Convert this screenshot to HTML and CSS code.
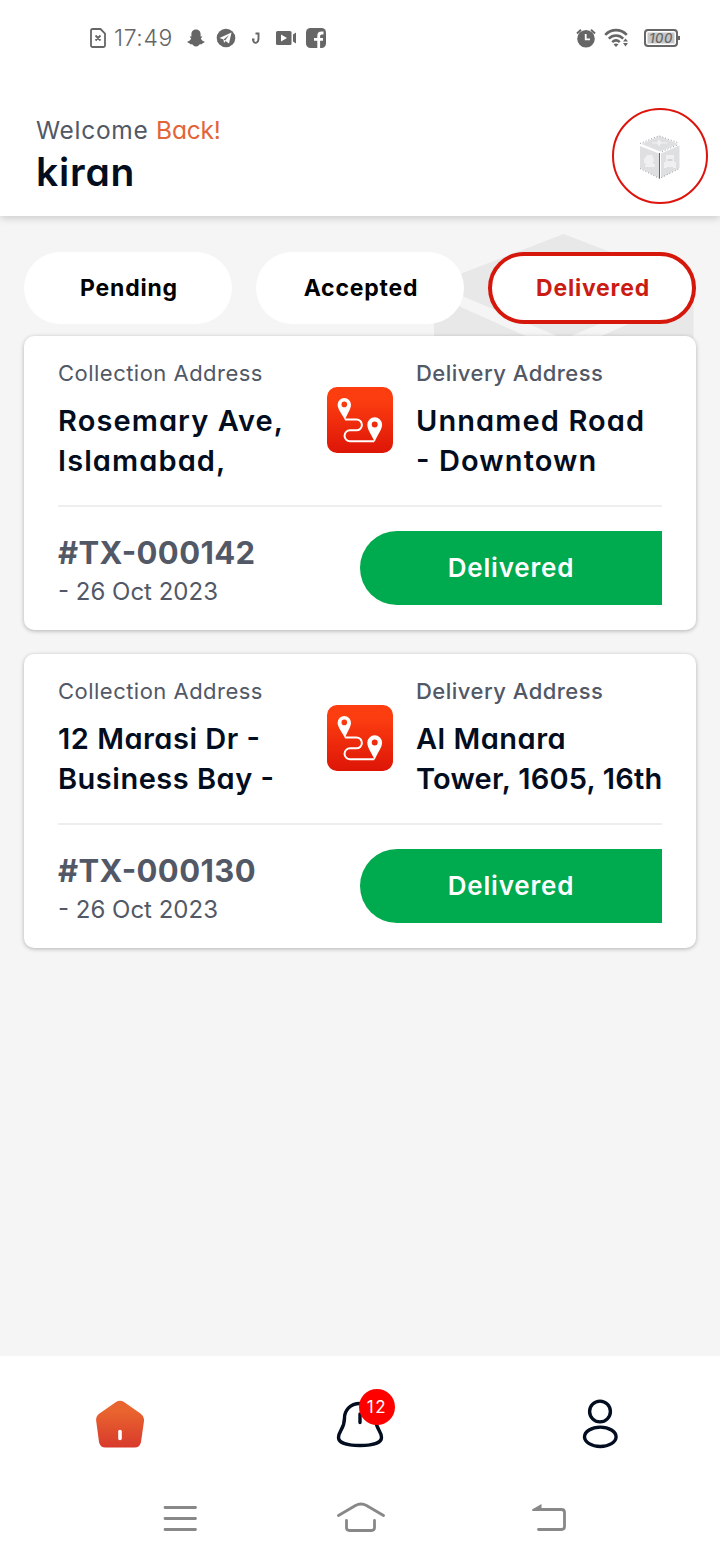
FILE: index.html
```html
<!DOCTYPE html>
<html lang="en">
<head>
  <meta charset="UTF-8">
  <meta name="viewport" content="width=device-width, initial-scale=1.0">
  <title>Deliveries</title>
  <link rel="stylesheet" href="styles.css">
</head>
<body>
  <svg class="defs" width="0" height="0">
    <defs>
      <linearGradient id="route-bg" x1="0" y1="0" x2="0" y2="1">
        <stop offset="0.2" stop-color="#fc3d10"/>
        <stop offset="1" stop-color="#dd1507"/>
      </linearGradient>
      <linearGradient id="home-bg" x1="0" y1="0" x2="0" y2="1">
        <stop offset="0.2" stop-color="#e9652f"/>
        <stop offset="1" stop-color="#d83a2b"/>
      </linearGradient>
      <symbol id="route" viewBox="0 0 66 66">
        <rect width="66" height="66" rx="10" fill="url(#route-bg)"/>
        <path d="M18 32.500H29.500a5.400 5.400 0 0 1 0 10.800H23a5.400 5.400 0 0 0 0 10.900H47" fill="none" stroke="#fff" stroke-width="2"/>
        <path fill="#fff" fill-rule="evenodd" d="M17.300 11a6.700 6.700 0 0 1 6.700 6.700C24 22 20 27 18 33C15 27 10.600 22 10.600 17.700A6.700 6.700 0 0 1 17.300 11zm0 3.600a2.800 2.800 0 1 0 0 5.600a2.800 2.800 0 0 0 0-5.600z"/>
        <path fill="#fff" fill-rule="evenodd" d="M47.700 30.300a7.400 7.400 0 0 1 7.400 7.400C55 43 50 48 47.700 55C45 48 40.300 43 40.300 37.700A7.400 7.400 0 0 1 47.700 30.300zm0 4.200a3 3 0 1 0 0 6a3 3 0 0 0 0-6z"/>
      </symbol>
    </defs>
  </svg>

  <div class="status-bar">
    <div class="status-left">
      <svg width="16" height="20" viewBox="0 0 16 20"><path d="M2.500 1H10.500L15 5.500V17.500A1.500 1.500 0 0 1 13.500 19H2.500A1.500 1.500 0 0 1 1 17.500V2.500A1.500 1.500 0 0 1 2.500 1zM5.500 7.500l5 5M10.500 7.500l-5 5" fill="none" stroke="#666" stroke-width="1.800"/></svg>
      <span class="clock">17:49</span>
      <svg class="snap" width="18" height="18" viewBox="0 0 18 18"><path fill="#666" d="M9 0.500c3.400 0 4.600 2.400 4.600 4.700V7.500l1.600 0c-.2 1-.8 1.300-1.400 1.700c.6 2 2 3 4 3.600c-.3 1-1.200 1.200-2.400 1.400c-.2 1-.4 1.200-2 1c-1.300-.1-2 2.300-4.400 2.300s-3.100-2.400-4.400-2.300c-1.600.2-1.800 0-2-1C1.400 14 .5 13.800.2 12.800c2-.6 3.400-1.600 4-3.600c-.6-.4-1.200-.7-1.400-1.700l1.600 0V5.200C4.400 2.900 5.600.5 9 .5z"/></svg>
      <svg class="telegram" width="20" height="20" viewBox="0 0 20 20"><circle cx="10" cy="10" r="9.300" fill="#666"/><path fill="#fff" d="M3.500 10L15.500 4.500L13 15.500L9.500 13L8 15L7.500 11.500z"/><path d="M7.700 11.500L13 7L9.200 12.600" fill="#666"/></svg>
      <svg class="jio" width="10" height="14" viewBox="0 0 10 14"><path d="M4.500 2.500H7.500V7.500C7.500 12 3.500 13.500 2 9.500M1 8.500H3.500" fill="none" stroke="#666" stroke-width="1.900"/></svg>
      <svg class="video" width="20" height="14" viewBox="0 0 20 14"><rect width="15.500" height="14" rx="1.500" fill="#666"/><path d="M5 3.500L11 7L5 10.500z" fill="#fff"/><path d="M17 3.500L20 1.500V12.500L17 10.500z" fill="#666"/></svg>
      <svg class="facebook" width="20" height="20" viewBox="0 0 20 20"><rect width="20" height="20" rx="4.500" fill="#666"/><path d="M17.500 5H15.500C13.200 5 12.700 6 12.700 8V20M8 11.300H17" fill="none" stroke="#fff" stroke-width="2.800"/></svg>
    </div>
    <div class="status-right">
      <svg width="20" height="20" viewBox="0 0 20 20"><circle cx="10" cy="10.800" r="8.800" fill="#666"/><path d="M1 5.500L5 1.800M19 5.500L15 1.800" stroke="#666" stroke-width="2"/><path d="M9.700 6V11.300H14" fill="none" stroke="#fff" stroke-width="1.800"/></svg>
      <svg class="wifi" width="25" height="20" viewBox="0 0 25 20"><path d="M1.200 6.800C7.500 .5 16.500 .5 22.800 6.800M4.800 10.600C9 6.500 15 6.500 19.200 10.600M8.200 14.100C10.500 12 13.500 12 15.800 14.100" fill="none" stroke="#666" stroke-width="2.600"/><path d="M9.500 16.300Q12 14.500 14.500 16.300L12 19z" fill="#666"/><path d="M19 13.500h5l-2.500-3zM19 15h5l-2.500 3.500z" fill="#666"/></svg>
      <div class="battery">100</div>
    </div>
  </div>

  <header class="header">
    <div>
      <p class="welcome">Welcome <span class="accent">Back!</span></p>
      <h1 class="user-name">kiran</h1>
    </div>
    <div class="avatar">
      <svg width="42" height="44" viewBox="0 0 42 44">
        <path fill="#dedfe1" d="M20.500 1L39 9L21 16.500L2.500 9zM1 11L20 18.500V43L1 33zM22 18.500L40.500 10.500V33L22 43z"/>
        <path d="M1 8.500L20 .8L40 8M1 33.500L20.500 43.500L40.500 33.500M23 16.500L39.500 9.500" fill="none" stroke="#999" stroke-width="1" stroke-dasharray="1 2"/>
        <path d="M20.500 18V43.500" stroke="#666" stroke-width="1"/>
        <path fill="#f0f0f1" d="M20 4l2 3.200h6v1.400h-6l-2 2.900l-2-2.900h-5V7.200h5zM8 20h5l2 4l-1 5h2v3H6v-2h2l-3-2v-4zM27 20h8v7h2v6h-3v-1h-6v1h-3v-6h2z"/>
        <path fill="#d4d5d7" d="M28.500 24h5v2h-5z"/>
      </svg>
    </div>
  </header>

  <main class="content">
    <svg class="watermark" width="260" height="300" viewBox="0 0 260 300"><path fill="#e8e8e8" d="M129.500 0L259.500 50L130 105L0 50zM0 61L123 116V300L0 240zM259.500 61V240L136 300V116z"/></svg>

    <div class="tabs">
      <button class="tab">Pending</button>
      <button class="tab">Accepted</button>
      <button class="tab active">Delivered</button>
    </div>

    <section class="card">
      <div class="addresses">
        <div class="address">
          <p class="label">Collection Address</p>
          <p class="place loose">Rosemary Ave,<br>Islamabad,</p>
        </div>
        <svg class="route-icon" width="66" height="66"><use href="#route"/></svg>
        <div class="address">
          <p class="label delivery">Delivery Address</p>
          <p class="place loose">Unnamed Road<br>- Downtown</p>
        </div>
      </div>
      <div class="order">
        <div>
          <p class="order-id">#TX-000142</p>
          <p class="date">- 26 Oct 2023</p>
        </div>
        <div class="order-status">Delivered</div>
      </div>
    </section>

    <section class="card">
      <div class="addresses">
        <div class="address">
          <p class="label">Collection Address</p>
          <p class="place">12 Marasi Dr -<br>Business Bay -</p>
        </div>
        <svg class="route-icon" width="66" height="66"><use href="#route"/></svg>
        <div class="address">
          <p class="label delivery">Delivery Address</p>
          <p class="place">Al Manara<br><span class="tight">Tower, 1605, 16th</span></p>
        </div>
      </div>
      <div class="order">
        <div>
          <p class="order-id">#TX-000130</p>
          <p class="date">- 26 Oct 2023</p>
        </div>
        <div class="order-status">Delivered</div>
      </div>
    </section>
  </main>

  <nav class="bottom-nav">
    <a class="nav-item">
      <svg width="48" height="48" viewBox="0 0 48 48"><path fill="url(#home-bg)" d="M20 2Q24-.5 28 2L44.500 13.500Q48.500 16.500 48 21L45 42Q44 47.500 38.500 47.500H9.500Q4 47.500 3 42L.2 21Q-.5 16.500 3.500 13.500z"/><path d="M24 31.500V38.500" stroke="#fff" stroke-width="3.600" stroke-linecap="round"/></svg>
    </a>
    <a class="nav-item">
      <svg width="48" height="48" viewBox="0 0 48 48"><path d="M24 3.500C13.500 3.500 8.500 11 8.500 18C8.500 29 2.500 31 2.500 37.500C2.500 43 12 45.500 24 45.500S45.500 43 45.500 37.500C45.500 31 39.500 29 39.500 18C39.500 11 34.500 3.500 24 3.500zM24 14V22.500" fill="none" stroke="#030d20" stroke-width="3.400" stroke-linecap="round"/></svg>
      <span class="badge">12</span>
    </a>
    <a class="nav-item">
      <svg class="person" width="48" height="50" viewBox="0 0 48 50"><circle cx="24" cy="11.500" r="10.400" fill="none" stroke="#030d20" stroke-width="3.400"/><ellipse cx="24.300" cy="36.800" rx="15.800" ry="9.700" fill="none" stroke="#030d20" stroke-width="3.400"/></svg>
    </a>
  </nav>

  <div class="system-nav">
    <svg class="key" width="34" height="28" viewBox="0 0 34 28"><path d="M2 3.500H32.500M2 14.500H32.500M2 25.500H32.500" stroke="#888" stroke-width="2.800" stroke-linecap="round"/></svg>
    <svg width="48" height="30" viewBox="0 0 48 30"><path d="M1.500 13.500L18.500 3.500Q24 .5 29.500 3.500L46.500 13.500M9.500 18.500V25.500Q9.500 28.500 12.500 28.500H34.500Q37.500 28.500 37.500 25.500V18.500" fill="none" stroke="#888" stroke-width="2.800" stroke-linecap="round"/></svg>
    <svg class="key" width="34" height="28" viewBox="0 0 34 28"><path d="M4 5.500H29.500Q32.500 5.500 32.500 8.500V22.500Q32.500 25.500 29.500 25.500H6.500" fill="none" stroke="#888" stroke-width="2.800" stroke-linecap="round"/><path d="M0 5.500L9.500 0V7H.5z" fill="#888"/></svg>
  </div>
</body>
</html>
```
FILE: styles.css
```css
* {
  box-sizing: border-box;
}
body {
  margin: 0;
  height: 1560px;
  display: flex;
  flex-direction: column;
  background: #fff;
  color: #030d20;
  font-family: Inter, 'Noto Sans', sans-serif;
  font-feature-settings: "cv11";
}
p, h1 {
  margin: 0;
  white-space: nowrap;
}
svg {
  display: block;
  flex: none;
}
.defs {
  position: absolute;
}

/* phone status bar */
.status-bar {
  position: relative;
  z-index: 2;
  height: 76px;
  padding: 0 42px 0 90px;
  display: flex;
  justify-content: space-between;
  align-items: center;
  background: #fff;
  color: #666;
}
.status-left, .status-right {
  display: flex;
  align-items: center;
}
.clock {
  width: 58px;
  margin: 0 15px 0 8px;
  font-size: 23px;
  font-weight: 300;
  letter-spacing: 0.6px;
}
.telegram {
  margin-left: 11px;
}
.jio {
  margin-left: 15px;
}
.video {
  margin-left: 15px;
}
.facebook {
  margin-left: 10px;
}
.wifi {
  margin-left: 8px;
}
.battery {
  position: relative;
  width: 34px;
  height: 18px;
  margin-left: 15px;
  border: 2px solid #666;
  border-radius: 4px;
  background: #c6c6c6;
  box-shadow: inset 0 0 0 1.5px #fff;
  font-size: 13px;
  font-style: italic;
  font-weight: 500;
  letter-spacing: 0.5px;
  line-height: 14px;
  text-align: center;
}
.battery::after {
  content: "";
  position: absolute;
  right: -4px;
  top: 5px;
  width: 2px;
  height: 4px;
  background: #666;
}

.header {
  position: relative;
  z-index: 1;
  height: 140px;
  padding: 32px 12px 0 36px;
  display: flex;
  justify-content: space-between;
  align-items: flex-start;
  background: #fff;
  box-shadow: 0 2px 8px rgba(0, 0, 0, 0.18);
}
.welcome {
  margin-top: 4px;
  font-size: 24.5px;
  letter-spacing: 0.7px;
  line-height: 36px;
  color: #525866;
}
.accent {
  letter-spacing: -0.2px;
  color: #e2653a;
}
.user-name {
  font-size: 39px;
  font-weight: 600;
  letter-spacing: 0.8px;
  line-height: 48px;
}
.avatar {
  width: 96px;
  height: 96px;
  padding-top: 2px;
  display: flex;
  align-items: center;
  justify-content: center;
  border: 2px solid #dc140c;
  border-radius: 50%;
}

.content {
  position: relative;
  flex: 1;
  padding: 36px 24px 0;
  background: #f5f5f5;
}
.watermark {
  position: absolute;
  left: 434px;
  top: 18px;
}
.tabs {
  position: relative;
  display: grid;
  grid-template-columns: repeat(3, 208px);
  gap: 24px;
  margin-bottom: 12px;
}
.tab {
  height: 72px;
  padding: 0 0 0 2px;
  border: 0;
  border-radius: 36px;
  background: #fff;
  color: #000;
  font-family: inherit;
  font-feature-settings: normal;
  font-size: 23px;
  font-weight: 700;
  letter-spacing: 0.8px;
}
.tab.active {
  border: 4px solid #d5170c;
  color: #cb1c13;
}
.card {
  position: relative;
  height: 294px;
  margin-bottom: 24px;
  padding: 20px 34px 0;
  border-radius: 10px;
  background: #fff;
  box-shadow: 0 1px 4px rgba(0, 0, 0, 0.28);
}
.addresses {
  height: 151px;
  display: grid;
  grid-template-columns: 269px 66px 1fr;
  border-bottom: 2px solid #eee;
}
.route-icon {
  margin-top: 30.5px;
}
.address + .route-icon + .address {
  padding-left: 23px;
}
.label {
  font-size: 22px;
  letter-spacing: 0.48px;
  line-height: 34px;
  color: #525866;
}
.label.delivery {
  font-weight: 500;
}
.place {
  margin-top: 11px;
  font-size: 29px;
  font-weight: 600;
  letter-spacing: 0.5px;
  line-height: 40px;
}
.place.loose {
  letter-spacing: 1.1px;
}
.tight {
  letter-spacing: 0.2px;
}
/* "case" lifts the hyphens to capital height */
.place, .order-id, .date {
  font-feature-settings: "cv11", "case";
}
.order {
  display: flex;
  justify-content: space-between;
  padding-top: 24px;
  color: #525866;
}
.order-id {
  font-size: 31px;
  font-weight: 700;
  letter-spacing: 0.4px;
  line-height: 44px;
}
.date {
  font-size: 24px;
  line-height: 34px;
}
.order-status {
  width: 302px;
  height: 74px;
  border-radius: 37px 0 0 37px;
  background: #00aa4f;
  color: #fff;
  font-size: 26px;
  font-weight: 600;
  letter-spacing: 0.8px;
  line-height: 74px;
  text-align: center;
}

.bottom-nav {
  height: 120px;
  padding-top: 44px;
  display: grid;
  grid-template-columns: repeat(3, 1fr);
  justify-items: center;
  background: #fff;
}
.nav-item {
  position: relative;
}
.person {
  overflow: visible;
}
.badge {
  position: absolute;
  left: 23px;
  top: -11px;
  width: 36px;
  height: 36px;
  border-radius: 50%;
  background: #f00;
  color: #fff;
  font-size: 17px;
  letter-spacing: 1.5px;
  line-height: 37px;
  text-align: center;
}

/* phone navigation keys */
.system-nav {
  height: 84px;
  padding: 26px 153px 0 163px;
  display: grid;
  grid-template-columns: 174px 195px 34px;
}
.key {
  margin-top: 2px;
}
```
